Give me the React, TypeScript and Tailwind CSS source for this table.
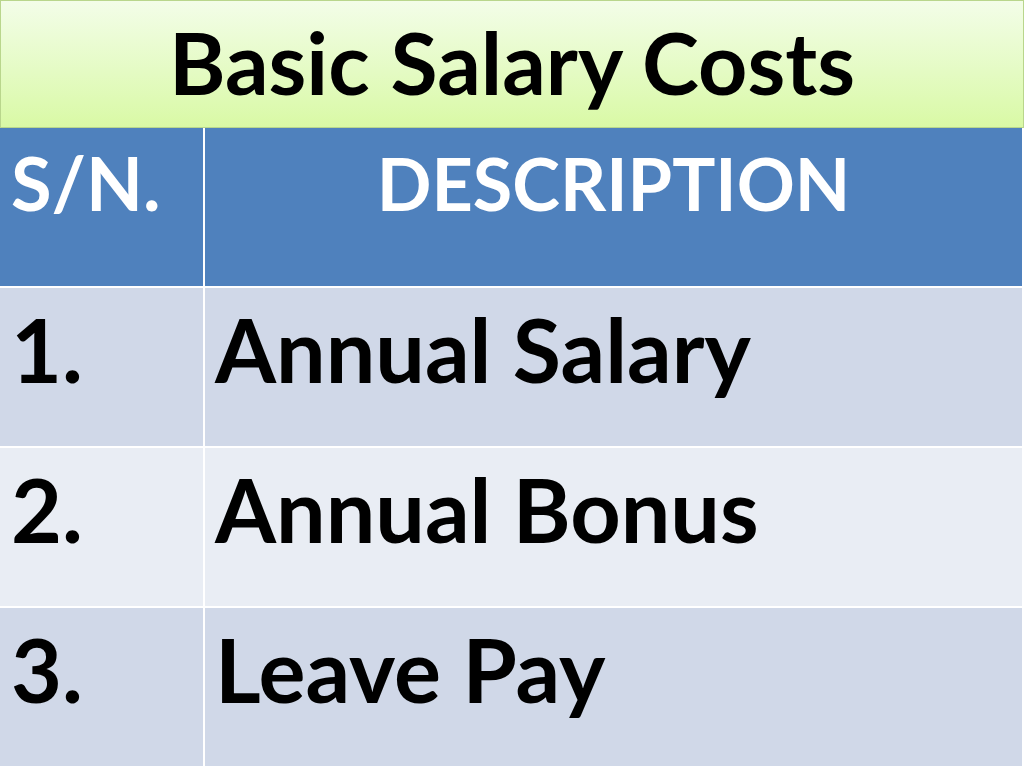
const rows = [
  { sn: "1.", desc: "Annual Salary", bg: "bg-[#d0d8e8]" },
  { sn: "2.", desc: "Annual Bonus", bg: "bg-[#e9edf4]" },
  { sn: "3.", desc: "Leave Pay", bg: "bg-[#d0d8e8]" },
];

export default function App() {
  return (
    <div className="h-[768px] w-[1024px] overflow-hidden bg-white font-['Lato','Carlito','Liberation_Sans',sans-serif] font-bold">
      <div className="flex h-[128px] items-start justify-center border border-[#b9d68c] bg-gradient-to-b from-[#f3fde8] to-[#d9f9a5] pt-[18px]">
        <h1 className="text-[86px] leading-none text-black">Basic Salary Costs</h1>
      </div>

      <div className="grid w-[1022px] grid-cols-[203px_1fr] gap-[2px] bg-white">
        <div className="h-[158px] bg-[#4f81bd] pl-[11px] pt-[18px] text-[74px] leading-none text-white">
          S/N.
        </div>
        <div className="h-[158px] bg-[#4f81bd] pt-[19px] text-center text-[72px] leading-none text-white">
          DESCRIPTION
        </div>
        {rows.map((r) => (
          <>
            <div
              key={r.sn + "a"}
              className={`h-[158px] ${r.bg} pl-[11px] pt-[17px] text-[88px] leading-none text-black`}
            >
              {r.sn}
            </div>
            <div
              key={r.sn + "b"}
              className={`h-[158px] ${r.bg} pl-[10px] pt-[17px] text-[88px] leading-none text-black`}
            >
              {r.desc}
            </div>
          </>
        ))}
      </div>
    </div>
  );
}
